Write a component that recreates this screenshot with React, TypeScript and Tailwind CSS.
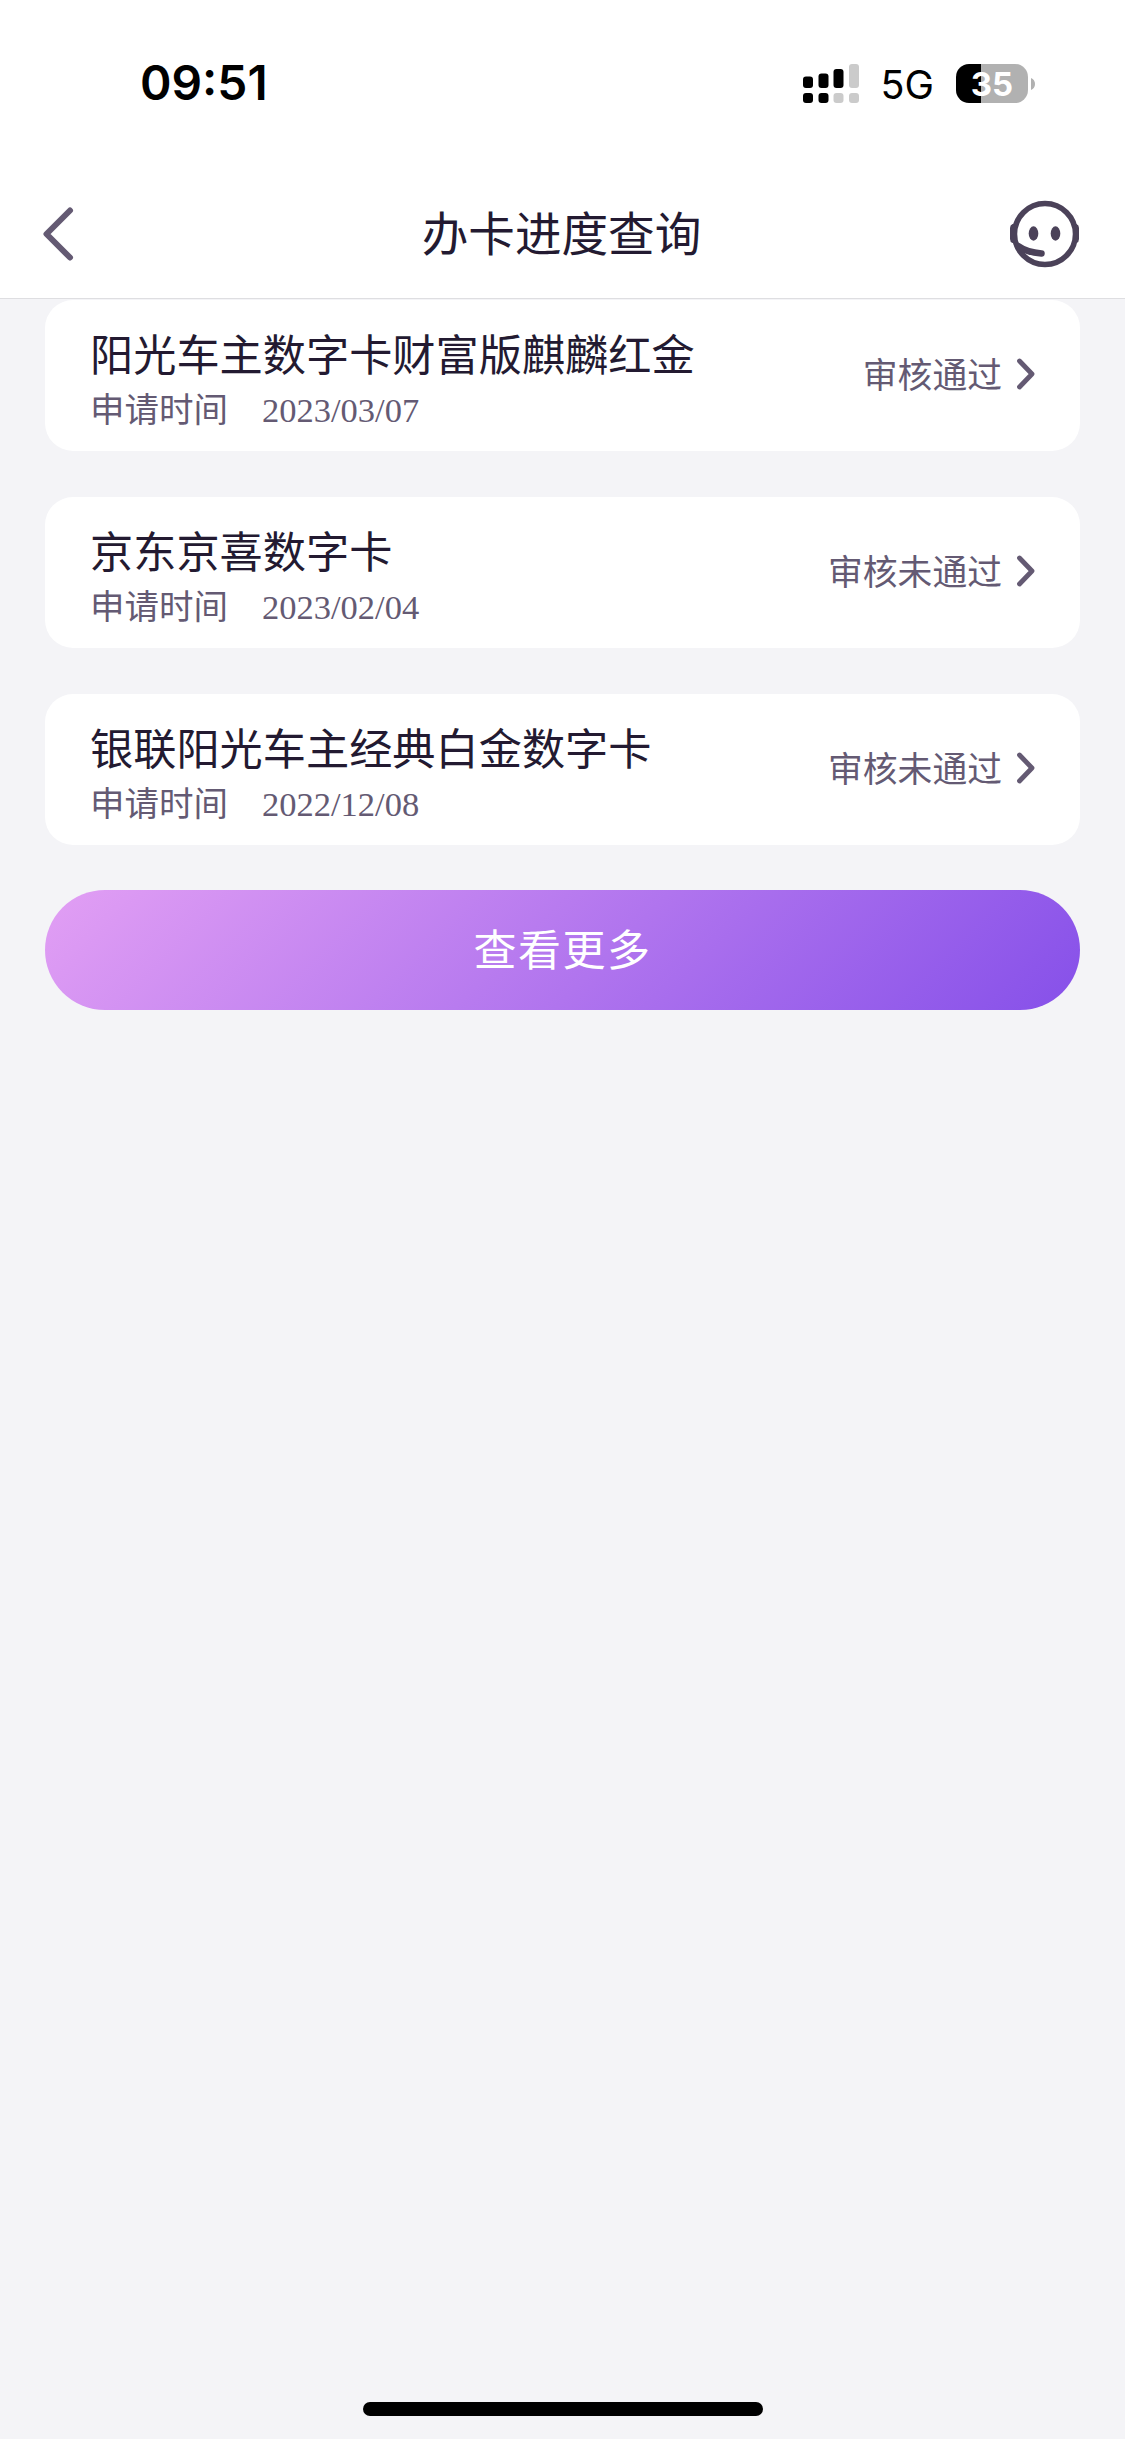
import type { FC } from "react";

type Application = {
  name: string;
  date: string;
  status: string;
};

const applications: Application[] = [
  { name: "阳光车主数字卡财富版麒麟红金", date: "2023/03/07", status: "审核通过" },
  { name: "京东京喜数字卡", date: "2023/02/04", status: "审核未通过" },
  { name: "银联阳光车主经典白金数字卡", date: "2022/12/08", status: "审核未通过" },
];

const SignalIcon: FC = () => (
  <svg width="58" height="40" viewBox="0 0 58 40" aria-hidden="true">
    <g fill="#000">
      <rect x="1" y="12.5" width="10" height="11.5" rx="3" />
      <rect x="16.5" y="9.5" width="10" height="14.5" rx="3" />
      <rect x="31.5" y="5" width="10" height="19" rx="3" />
      <rect x="1" y="29" width="10" height="10" rx="3" />
      <rect x="16.5" y="29" width="10" height="10" rx="3" />
    </g>
    <g fill="#cbcbcb">
      <rect x="47" y="0" width="10" height="24" rx="3" />
      <rect x="31.5" y="29" width="10" height="10" rx="3" />
      <rect x="47" y="29" width="10" height="10" rx="3" />
    </g>
  </svg>
);

const Battery: FC = () => (
  <div className="flex items-center gap-[3px]">
    <div className="flex h-[39px] w-[72px] items-center justify-center rounded-[13px] bg-[linear-gradient(90deg,#000_25px,#b1b1b1_25px)] pt-px text-[33px] leading-none font-bold text-white">
      35
    </div>
    <svg width="4" height="12" viewBox="0 0 4 12" aria-hidden="true">
      <path d="M0 0C2.5 1 4 3.2 4 6s-1.500 5-4 6z" fill="#b1b1b1" />
    </svg>
  </div>
);

const StatusBar: FC = () => (
  <div className="flex h-[170px] items-center justify-between pr-[90px] pb-[3px] pl-[140px] font-[Inter,'Liberation_Sans',sans-serif] text-black">
    <span className="pt-px text-[47.8px] leading-none font-semibold">09:51</span>
    <div className="flex items-center">
      <SignalIcon />
      <span className="mr-[22px] ml-[21px] pt-[4px] text-[39.5px] leading-none">5G</span>
      <Battery />
    </div>
  </div>
);

const ServiceIcon: FC = () => (
  <svg width="70" height="68" viewBox="0 0 70 68" fill="none" aria-hidden="true">
    <circle cx="35" cy="34" r="30.500" stroke="#4b4259" strokeWidth="5.500" />
    <path
      d="M6 24H2.500Q0 25 0 28V39Q0 42 2.500 43H6ZM63 24H66.500Q69 25 69 28V39Q69 42 66.500 43H63Z"
      fill="#4b4259"
    />
    <ellipse cx="23.500" cy="33.500" rx="4.800" ry="7.200" fill="#4b4259" />
    <ellipse cx="45.500" cy="33.500" rx="4.800" ry="7.200" fill="#4b4259" />
    <path
      d="M8 46Q17 52.500 31.500 53.500"
      stroke="#4b4259"
      strokeWidth="6.500"
      strokeLinecap="round"
    />
  </svg>
);

const NavBar: FC = () => (
  <header className="flex h-[129px] items-center justify-between border-b border-[#dedee1] pr-[45px] pl-[43px]">
    <button type="button" aria-label="返回" className="flex w-[70px]">
      <svg width="32" height="54" viewBox="0 0 32 54" fill="none" aria-hidden="true">
        <path
          d="M27 3.500L3.500 27L27 50.500"
          stroke="#645a73"
          strokeWidth="6"
          strokeLinecap="round"
          strokeLinejoin="round"
        />
      </svg>
    </button>
    <h1 className="pb-[5px] text-[46.6px] leading-none text-[#231a31]">办卡进度查询</h1>
    <button type="button" aria-label="客服">
      <ServiceIcon />
    </button>
  </header>
);

const ApplicationCard: FC<{ item: Application }> = ({ item }) => (
  <li className="flex h-[151px] items-center justify-between rounded-[28px] bg-white px-[45px]">
    <div className="pt-[9px]">
      <p className="text-[43.2px] leading-[56px] text-[#231a31]">{item.name}</p>
      <p className="flex items-baseline gap-[34px] text-[34.5px] leading-[54px] text-[#645a73]">
        <span>申请时间</span>
        <span className="font-['Liberation_Serif',serif]">{item.date}</span>
      </p>
    </div>
    <div className="flex items-center pb-[3px] text-[34.8px] leading-none text-[#645a73]">
      <span className="pb-px">{item.status}</span>
      <svg className="ml-[14px]" width="19" height="32" viewBox="0 0 19 32" fill="none" aria-hidden="true">
        <path
          d="M3.500 3L16 16L3.500 29"
          stroke="#645a73"
          strokeWidth="4.800"
          strokeLinecap="round"
          strokeLinejoin="round"
        />
      </svg>
    </div>
  </li>
);

export default function App() {
  return (
    <div className="flex h-[2439px] w-[1125px] flex-col bg-[#f4f4f7] font-['Noto_Sans_CJK_SC',sans-serif]">
      <div className="bg-white">
        <StatusBar />
        <NavBar />
      </div>
      <main className="flex-1 px-[45px] pt-px">
        <ul className="flex flex-col gap-[46px]">
          {applications.map((item) => (
            <ApplicationCard key={item.date} item={item} />
          ))}
        </ul>
        <button
          type="button"
          className="mt-[45px] flex h-[120px] w-full items-center justify-center rounded-full bg-[linear-gradient(135deg,#e29ff4_0%,#8650e9_100%)] pb-[5px] text-[43px] leading-none tracking-[1.5px] text-white"
        >
          查看更多
        </button>
      </main>
      <div className="flex justify-center pb-[23px]">
        <div className="h-[14px] w-[400px] rounded-full bg-black" />
      </div>
    </div>
  );
}
